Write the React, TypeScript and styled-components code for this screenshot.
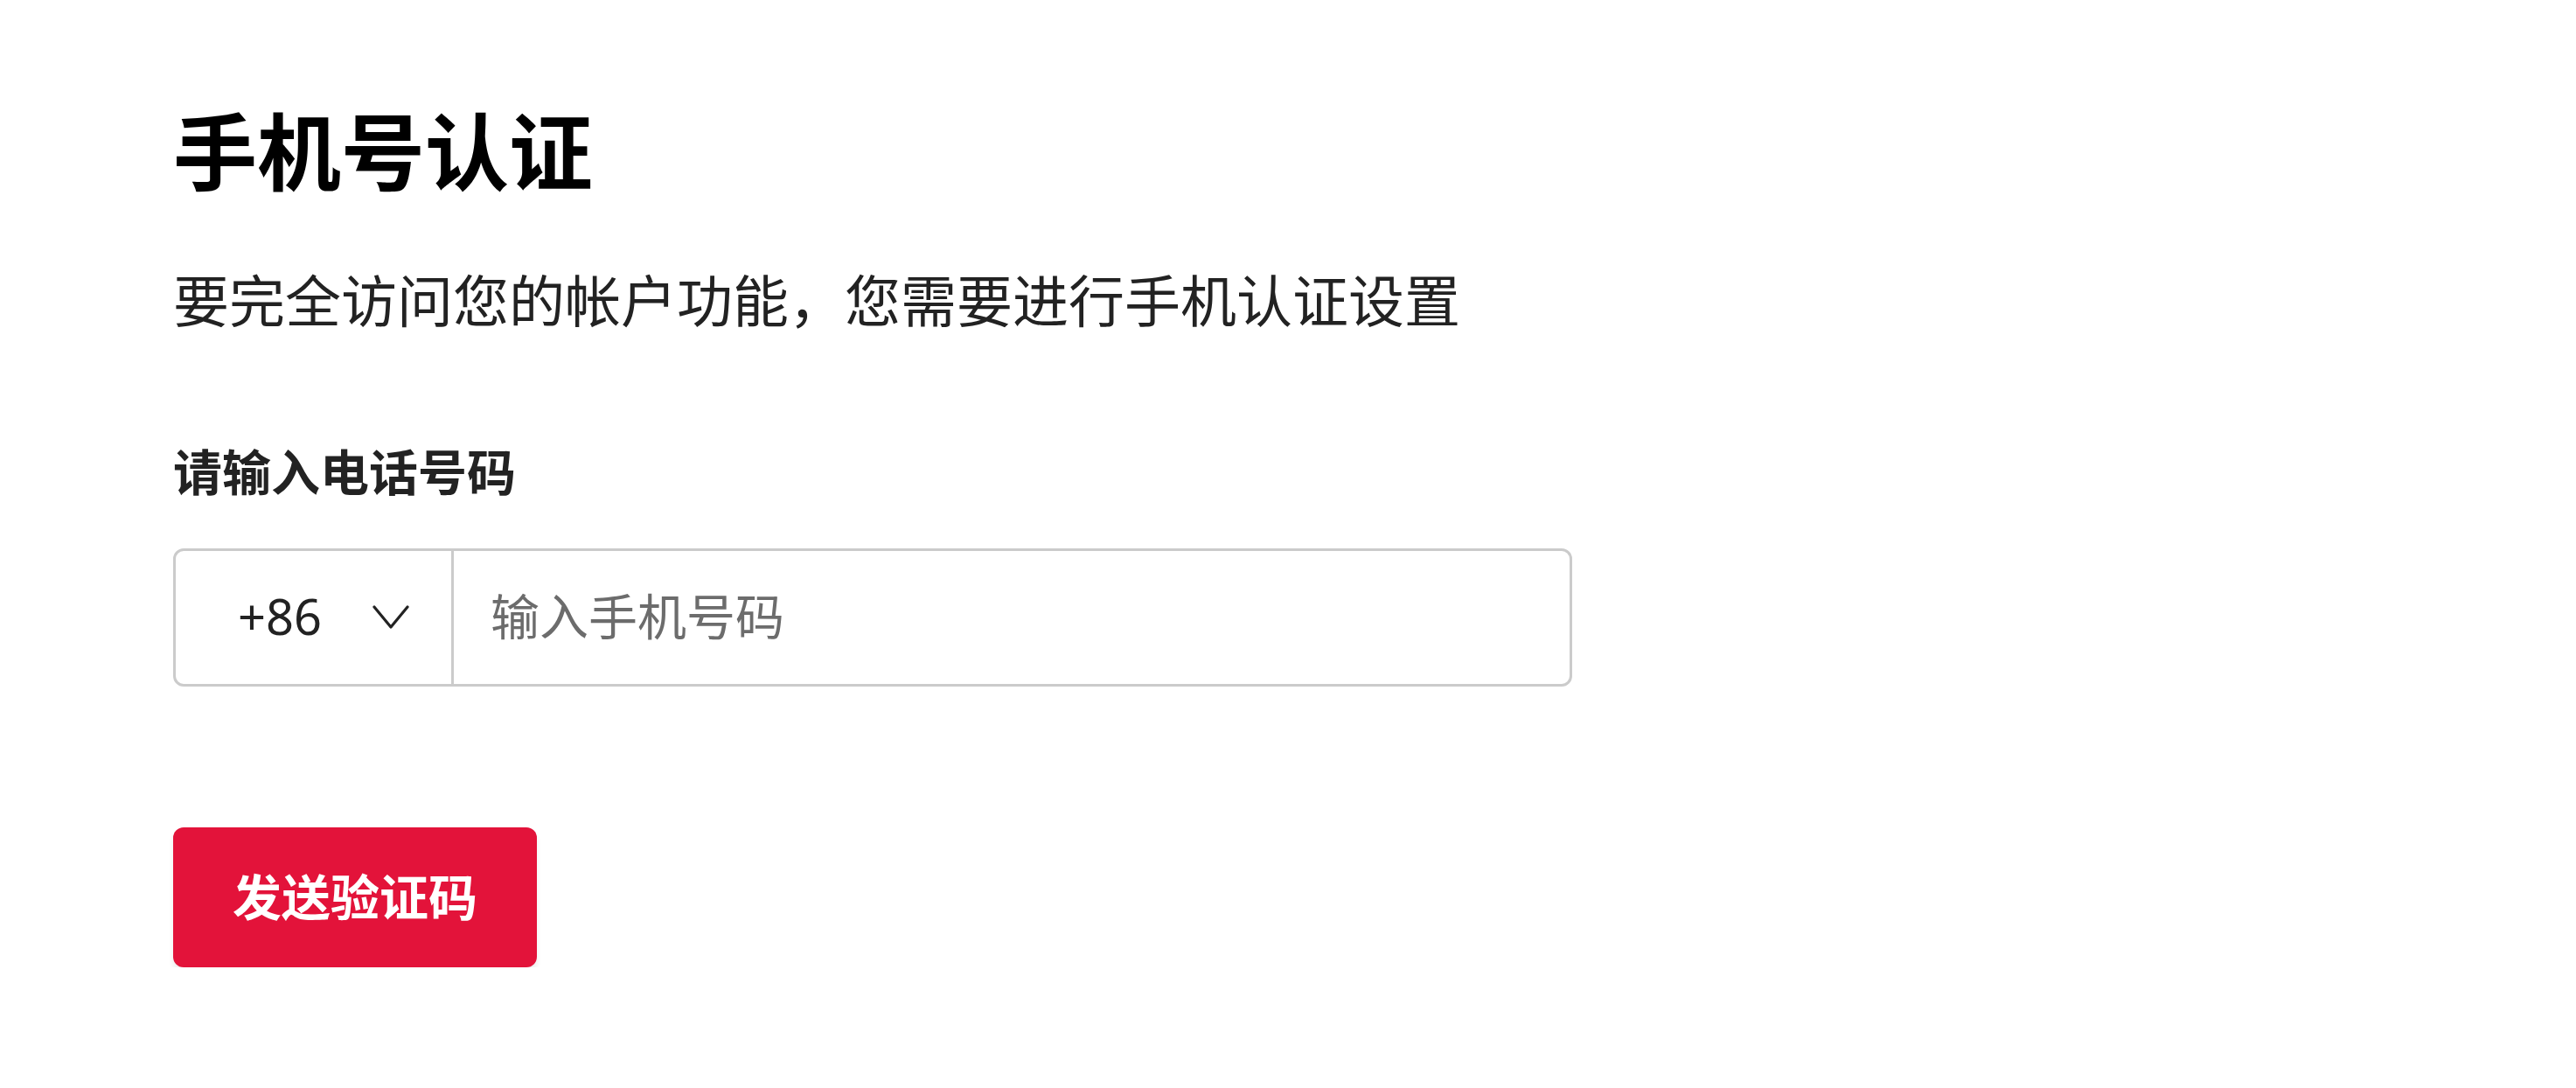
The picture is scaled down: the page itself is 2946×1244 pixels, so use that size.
import styled, { createGlobalStyle } from 'styled-components';

const GlobalStyle = createGlobalStyle`
  html, body {
    margin: 0;
    padding: 0;
    background: #ffffff;
  }
  body {
    font-family: 'Noto Sans', 'Noto Sans CJK SC', sans-serif;
  }
`;

const StyledPage = styled.div`
  display: flex;
  flex-direction: column;
  align-items: flex-start;
  padding: 113px 0 0 198px;
  box-sizing: border-box;
  font-family: 'Noto Sans', 'Noto Sans CJK SC', sans-serif;
`;

const StyledTitle = styled.h1`
  margin: 0;
  font-size: 96px;
  line-height: 120px;
  font-weight: 700;
  color: #000;
`;

const StyledIntro = styled.p`
  margin: 63px 0 0;
  font-size: 64px;
  line-height: 96px;
  color: #222;
`;

const StyledLabel = styled.label`
  margin-top: 105px;
  font-size: 56px;
  line-height: 84px;
  font-weight: 700;
  color: #222;
`;

const StyledPhoneField = styled.div`
  display: flex;
  margin-top: 46px;
  width: 1600px;
  height: 158px;
  box-sizing: border-box;
  border: 3px solid #cbcbcb;
  border-radius: 12px;
`;

const StyledCountryCode = styled.button`
  display: flex;
  align-items: center;
  gap: 58px;
  width: 318px;
  padding: 0 0 4px 71px;
  box-sizing: border-box;
  background: none;
  border: none;
  border-right: 3px solid #cbcbcb;
  font-family: 'Noto Sans', sans-serif;
  font-size: 56px;
  color: #222;
  cursor: pointer;

  svg {
    margin-top: 4px;
  }
`;

const StyledPhoneInput = styled.input`
  flex: 1;
  min-width: 0;
  padding: 0 0 10px 42px;
  border: none;
  outline: none;
  background: transparent;
  border-radius: 0 12px 12px 0;
  font-family: 'Noto Sans CJK SC', sans-serif;
  font-size: 56px;
  color: #222;

  &::placeholder {
    color: #6c6c6c;
  }
`;

const StyledSendButton = styled.button`
  margin-top: 161px;
  width: 416px;
  height: 160px;
  padding: 0 0 8px;
  border: none;
  border-radius: 12px;
  background: #e3133a;
  box-shadow: 0 5px 6px rgba(0, 0, 0, 0.08);
  color: #fff;
  font-family: 'Noto Sans CJK SC', sans-serif;
  font-size: 56px;
  font-weight: 700;
  cursor: pointer;
`;

const Chevron = () => (
  <svg width="42" height="30" viewBox="0 0 42 30" fill="none">
    <polyline
      points="2,3 21,26 40,3"
      stroke="#222"
      strokeWidth="3.2"
      strokeLinejoin="round"
      strokeLinecap="round"
    />
  </svg>
);

const App = () => {
  return (
    <>
      <GlobalStyle />
      <StyledPage>
        <StyledTitle>手机号认证</StyledTitle>
        <StyledIntro>要完全访问您的帐户功能，您需要进行手机认证设置</StyledIntro>
        <StyledLabel htmlFor="phone">请输入电话号码</StyledLabel>
        <StyledPhoneField>
          <StyledCountryCode type="button">
            <span>+86</span>
            <Chevron />
          </StyledCountryCode>
          <StyledPhoneInput id="phone" placeholder="输入手机号码" />
        </StyledPhoneField>
        <StyledSendButton type="button">发送验证码</StyledSendButton>
      </StyledPage>
    </>
  );
};

export default App;
